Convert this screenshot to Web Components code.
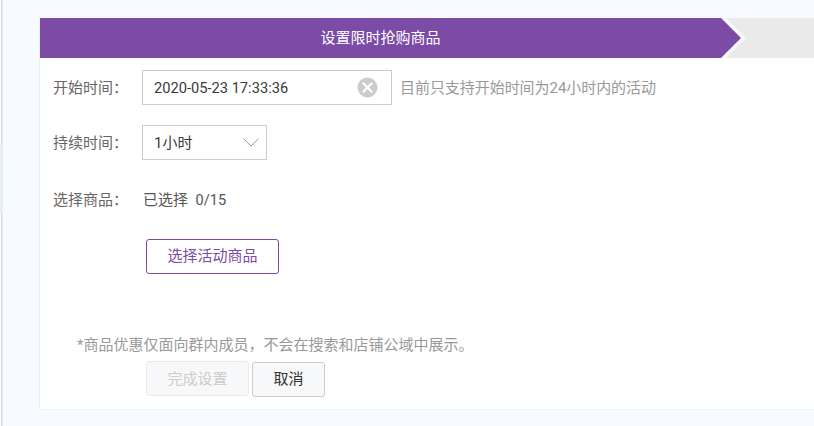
<!DOCTYPE html>
<html lang="zh-CN"><head><meta charset="utf-8"><title>设置限时抢购商品</title>
<style>
html,body{margin:0;padding:0;height:426px;overflow:hidden;background:#f7fbff}
body{font:15px/20px Roboto,"Noto Sans CJK SC",sans-serif;color:#333}
</style></head><body>
<flash-page>
  <step-bar>设置限时抢购商品</step-bar>
  <form-row label="开始时间：" top="12" h="35">
    <date-field>2020-05-23 17:33:36</date-field>
    <span style="margin-left:8px;color:#999;letter-spacing:-.05px">目前只支持开始时间为24小时内的活动</span>
  </form-row>
  <form-row label="持续时间：" top="20" h="35"><select-field>1小时</select-field></form-row>
  <form-row label="选择商品：" top="30" h="20"><span style="margin-left:1px;color:#555">已选择&nbsp;&nbsp;<span style="font-size:14.6px">0/15</span></span></form-row>
  <action-btn kind="outline" style="margin:29px 0 0 106px">选择活动商品</action-btn>
  <note-text>*商品优惠仅面向群内成员，不会在搜索和店铺公域中展示。</note-text>
  <btn-row>
    <action-btn kind="disabled">完成设置</action-btn>
    <action-btn kind="plain">取消</action-btn>
  </btn-row>
</flash-page>
<script>
function def(name, css, html, init){
  customElements.define(name, class extends HTMLElement{
    connectedCallback(){
      if(this.shadowRoot) return;
      const r=this.attachShadow({mode:'open'});
      r.innerHTML='<style>'+css+'</style>'+(typeof html==='function'?html(this):html);
      if(init) init(this,r);
    }
  });
}
def('flash-page',
 `:host{display:block;height:426px;box-sizing:border-box;padding:18px 0 0 39px;position:relative}
  .edge{position:absolute;left:0;top:0;bottom:0;width:1px;background:#fbfdff}
  .rail{position:absolute;left:1px;top:0;bottom:0;width:2px;background:linear-gradient(90deg,#d5dbe2 50%,#e6ebf1 50%)}
  .tint{position:absolute;left:0;top:145px;height:68px;width:2px;background:#e3eff8}
  .card{box-sizing:border-box;height:392px;background:#fff;border:1px solid #edf1f5;border-top:0;border-right:0}`,
 `<div class="edge"></div><div class="rail"></div><div class="tint"></div><div class="card"><slot></slot></div>`);
def('step-bar',
 `:host{display:flex;height:40px;background:#eaeaea}
  .main{width:681px;background:#7b4ba6;color:#fff;display:flex;align-items:center;justify-content:center;line-height:40px;flex:none}
  svg{display:block;flex:none;width:26px;height:40px}`,
 `<div class="main"><slot></slot></div><svg viewBox="0 0 26 40"><polygon points="0,0 5,0 25,20 5,40 0,40" fill="#f7f9fd"/><polygon points="0,0 0,40 20,20" fill="#7b4ba6"/></svg>`);
def('form-row',
 `:host{display:flex;align-items:center}
  .l{width:102px;padding-left:13px;box-sizing:border-box;color:#666;flex:none}`,
 h=>`<div class="l">${h.getAttribute('label')}</div><slot></slot>`,
 h=>{h.style.marginTop=h.getAttribute('top')+'px';h.style.height=h.getAttribute('h')+'px';});
def('date-field',
 `:host{display:flex;align-items:center;box-sizing:border-box;width:250px;height:35px;border:1px solid #ccc;padding:0 13px 0 11px;color:#3a3a3a;justify-content:space-between;flex:none;font-size:14.67px}
  svg{display:block;width:21px;height:21px;flex:none}`,
 `<slot></slot><svg viewBox="0 0 21 21"><circle cx="10.5" cy="10.5" r="10" fill="#ccc"/><path d="M6.5 6.5l8 8M14.5 6.5l-8 8" stroke="#fff" stroke-width="2.2" stroke-linecap="round"/></svg>`);
def('select-field',
 `:host{display:flex;align-items:center;box-sizing:border-box;width:125px;height:35px;border:1px solid #ccc;padding:0 7px 0 11px;justify-content:space-between;color:#3a3a3a}
  svg{display:block;width:16px;height:9px;flex:none}`,
 `<slot></slot><svg viewBox="0 0 16 9"><path d="M.5.7L8 8 15.5.7" fill="none" stroke="#999" stroke-width="1"/></svg>`);
def('action-btn',
 `:host{display:flex;align-items:center;justify-content:center;box-sizing:border-box;height:35px;border-radius:3px}
  :host([kind=outline]){width:133px;border:1px solid #7b4ba6;color:#7b4ba6;background:#fff;padding-bottom:2px}
  :host([kind=disabled]){width:103px;border:1px solid #ebebeb;color:#ccc;background:#f7f8f9}
  :host([kind=plain]){width:73px;border:1px solid #ccc;color:#333;background:#f7f8f9;margin:1px 0 0 3px;padding-bottom:2px}`,
 `<slot></slot>`);
def('note-text',
 `:host{display:block;margin:61px 0 0 37px;color:#999}`,`<slot></slot>`);
def('btn-row',
 `:host{display:flex;align-items:flex-start;margin:6px 0 0 106px}`,`<slot></slot>`);
</script>
</body></html>
